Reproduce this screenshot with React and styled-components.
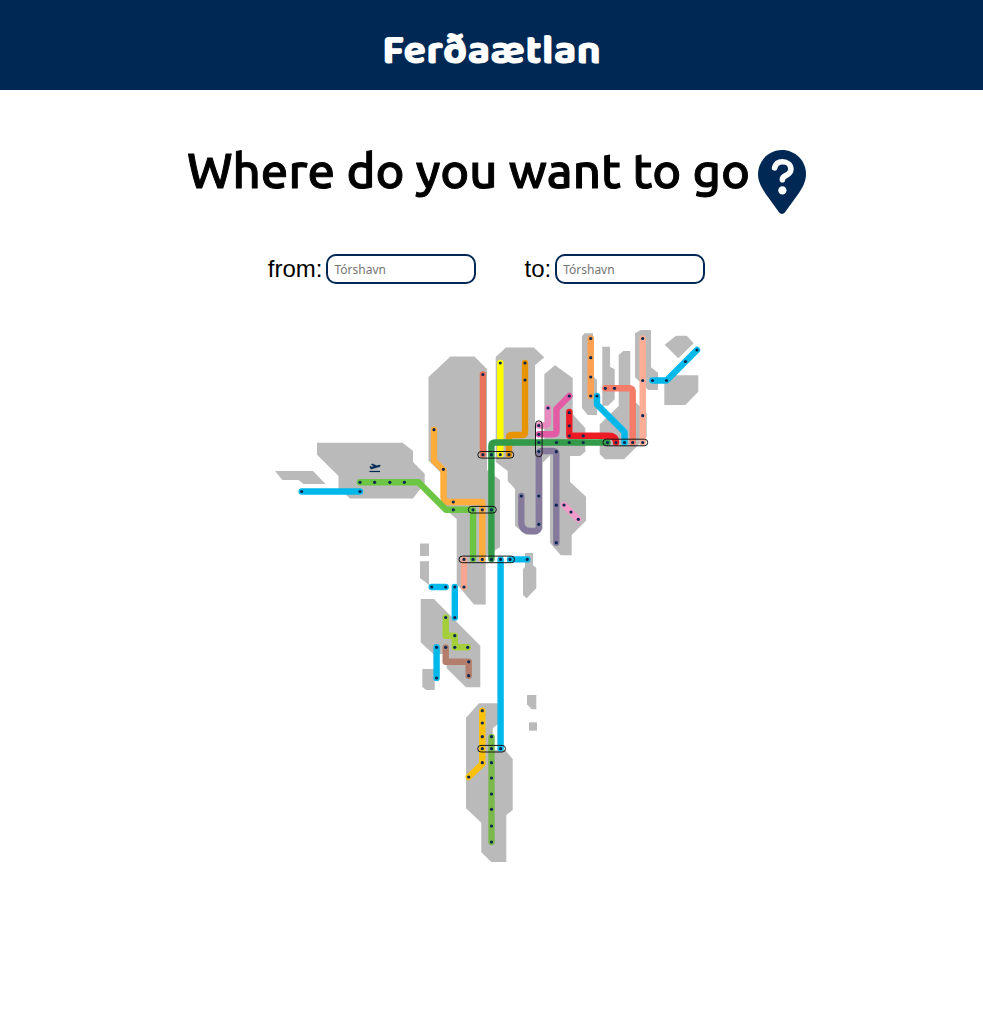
import React from "react";
import styled, { createGlobalStyle } from "styled-components";

const NAVY = "#002855";
const BLUE = "#00b9ea";

const GlobalStyle = createGlobalStyle`
  body {
    margin: 0;
    background: #fff;
    color: #000;
    font-family: "Liberation Sans", Arial, sans-serif;
  }
`;

const Header = styled.header`
  display: flex;
  align-items: center;
  justify-content: center;
  box-sizing: border-box;
  height: 90px;
  padding-top: 14px;
  background: ${NAVY};
`;

const Brand = styled.h1`
  margin: 0;
  color: #fff;
  font-family: Baloo, "Baloo Bhai", "Baloo 2", Inter, sans-serif;
  font-size: 42px;
  font-weight: 900;
  line-height: 48px;
`;

const Main = styled.main`
  display: flex;
  flex-direction: column;
  align-items: center;
  padding: 60px 16px;
`;

const Question = styled.div`
  display: flex;
  align-items: flex-start;
  gap: 8px;
  margin-left: 10px;
`;

const QuestionText = styled.h2`
  margin: 0;
  font-family: Ubuntu, "Noto Sans", sans-serif;
  font-size: 49px;
  font-weight: 500;
  line-height: 40px;
  -webkit-text-stroke: 1px #000;
`;

const PinIcon = styled.svg`
  flex: none;
  width: 48px;
  height: 64px;
`;

const SearchForm = styled.form`
  display: flex;
  flex-wrap: wrap;
  justify-content: center;
  gap: 16px 48px;
  margin-top: 40px;
  padding-right: 10px;
`;

const Field = styled.div`
  display: flex;
  align-items: center;
  gap: 4px;
`;

const Label = styled.label`
  font-size: 24px;
  line-height: 30px;
`;

const PlaceInput = styled.input`
  box-sizing: border-box;
  width: 150px;
  height: 30px;
  padding: 0 6px;
  border: 2px solid ${NAVY};
  border-radius: 10px;
  background: #fff;
  font-family: "Noto Sans", sans-serif;
  font-size: 12px;

  &::placeholder {
    color: #757575;
  }
`;

const RouteMap = styled.svg`
  width: 443px;
  max-width: 100%;
  height: auto;
  margin-top: 41px;
`;

const islands = [
  "275,471 313,471 325.5,484 303.5,484 298.5,480 282.5,480",
  "317,442.7 402.5,442.7 413,451 413,462 424.7,473.7 424.7,483 413,498.5 350,498.5 338.5,488 338.5,476 317,454.7",
  "428.5,377 450.5,356.5 474.5,356.5 487,369 487,470 500,480 500,547 494,551 485.7,556 485.7,604.5 474,604.5 456.7,584 456.7,519 444,508 444,476 428.5,460.6",
  "495.7,357 506,347.5 533.7,347.5 544.3,357.3 535,365.3 535,440 549.5,446 549.5,456 542.7,462.7 542.7,528.7 536.7,534.7 526,534.7 515,525.7 515,489 507.7,481 507.7,471 495.7,462",
  "544.3,374.3 555,365.3 572.7,378 572.7,414.3 585.3,428.3 585.3,451.7 580,456 570,456 570,481.7 586,496.7 586,520.7 571.7,535 571.7,555.3 560.7,555.3 550,542.7 550,456 544.3,450",
  "582,336 584.7,333.3 593,333.3 593,376 597,380 597,415 587.7,415 582,408",
  "602.3,346.7 610,346.7 610,366.7 614.7,369.3 614.7,399.3 608,405.7 602.3,405.7",
  "618.7,355 623.3,351 630.3,351 630.3,400 636.7,403.3 646.7,413.3 646.7,436.7 624,459.3 605,459.3 599.7,454 599.7,424.3 618.7,406",
  "635,333.3 640.7,330 651,330 651,367.3 658,372.7 658,390 648.3,390 635,377.3",
  "664.7,344.7 676,335.7 686.7,335.7 693.7,343.3 678.3,358.3",
  "671.7,375.3 698.3,375.3 698.3,391.7 685.3,405 664.3,405 664.3,382.3",
  "525,553 533,553 533,565.3 536.3,567.7 536.3,588.3 526.7,598.3 523,595 523,569.3 525,566.7",
  "420,543.5 429,543.5 429,556 420,556",
  "420,561.3 429,561.3 429,585 420,578",
  "420.7,599 434,599 480.3,645.7 480.3,687.3 466,687.3 446.7,668.3 446.7,654 433.3,654 420.7,642.3",
  "422.3,669 434.7,669 434.7,690 426,690 422.3,686.7",
  "466,717.7 479,703.2 498.3,703.2 498.3,724 492.7,728.3 492.7,750 505,750 512.7,759 512.7,810 506.3,815 506.3,862 491.3,862 481.3,852.3 481.3,822.7 466,808.3",
  "527,695 536.3,695 536.3,709.3 531.7,709.3 527,704.3",
  "529,722.3 537,722.3 537,730.7 529,730.7",
];

const routes = [
  { color: BLUE, d: "M301.7 491.5H360" },
  { color: "#ffad3d", d: "M434 429.7V461L443.5 470V497Q443.5 502 449 502H482.3V559" },
  { color: "#6cc644", d: "M360 482.3H418.5L446 509.8H473V559" },
  { color: "#e8735a", d: "M482.9 374.5V454.5" },
  { color: "#ffff00", d: "M500.3 363V454.5" },
  { color: "#e89400", d: "M525 363V432Q525 435 522 435H512Q509 435 509 438V454.5" },
  { color: "#e88ac0", d: "M548 408V422Q548 425.5 544.5 425.5H539" },
  { color: "#e35aa5", d: "M569.3 396L556.5 409V431Q556.5 434.3 553.5 434.3H539" },
  { color: "#857a9c", d: "M521.3 496V522Q521.3 531 530.5 531H535Q538.8 531 538.8 527V454Q538.8 451 542 451H553Q556.3 451 556.3 454V542.7" },
  { color: "#329a48", d: "M491.4 559V446Q491.4 442.5 495 442.5H607.5" },
  { color: "#ed1c24", d: "M569.3 412V435.8H608Q616 435.8 616 442.5" },
  { color: "#fda04f", d: "M590.7 338.5V396" },
  { color: BLUE, d: "M597 396V404.5L624.5 432V442.5" },
  { color: "#f57c68", d: "M605.3 388.3H629Q632.7 388.3 632.7 392V442.5" },
  { color: "#ffad96", d: "M642.7 338.5V442.5" },
  { color: BLUE, d: "M652.5 380.5H666.5L697 350" },
  { color: "#f19bca", d: "M564 505L578.3 519.3" },
  { color: "#f5a78f", d: "M464 559.4V587" },
  { color: BLUE, d: "M500.6 559.4V748.5" },
  { color: BLUE, d: "M510 559.4H527.3" },
  { color: BLUE, d: "M431.7 587H445.7" },
  { color: BLUE, d: "M454.8 587V617.5" },
  { color: "#a4cf3b", d: "M445.7 617.5V635.7H454.8V647.3H467.7" },
  { color: "#b37f6c", d: "M445.7 647.5V661.8H468.7V675.7" },
  { color: BLUE, d: "M436.6 647.3V678" },
  { color: "#f9c10c", d: "M482.3 710.7V764L468.7 777" },
  { color: "#7ab84c", d: "M491.5 737V842" },
];

const stops = [
  [301.7, 491.5], [360, 491.5], [360, 482.3], [374.6, 482.3], [389.8, 482.3], [404.4, 482.3],
  [434, 429.7], [443.4, 469.3], [453.3, 502], [453.3, 509.8], [473, 509.8], [482.3, 509.8], [491.4, 509.8],
  [482.9, 374.5], [482.9, 454.7], [491.4, 454.7], [500.3, 454.7], [509, 454.7],
  [500.3, 363], [525, 363], [525, 380], [548, 408],
  [538.8, 425.5], [538.8, 434.3], [538.8, 442.5], [538.8, 451.5], [556.5, 442.5], [569.3, 442.5], [583.2, 442.5],
  [569.3, 396], [569.3, 412.7], [569.3, 425.8], [569.3, 435.8], [583.2, 435.8], [556.3, 451.7],
  [521.3, 496], [538.8, 496], [538.8, 524.3], [556.3, 505.2], [556.3, 542.7], [564, 505], [571, 512], [578.3, 519.3],
  [590.7, 338.5], [590.7, 357.7], [590.7, 377], [590.7, 396], [597, 396], [605.3, 388.3], [614.5, 388.3],
  [607.5, 442.5], [616, 442.5], [624.5, 442.5], [632.7, 442.5], [642.7, 442.5],
  [642.7, 338.5], [642.7, 380.5], [642.7, 415.7], [652.5, 380.5], [666.5, 380.5], [685.5, 361.5], [697, 350],
  [464, 559.4], [473, 559.4], [482.3, 559.4], [491.4, 559.4], [500.6, 559.4], [510, 559.4], [527.3, 559.4],
  [464, 587], [431.7, 587], [445.7, 587], [454.8, 587], [454.8, 617.5], [445.7, 617.5], [454.8, 635.7],
  [454.8, 647.3], [467.7, 647.3], [445.7, 647.3], [436.6, 647.3], [468.7, 661.8], [468.7, 675.7], [436.6, 678],
  [482.3, 710.7], [482.3, 723], [482.3, 736.7], [482.3, 748.7], [482.3, 762.7], [468.7, 777],
  [491.5, 736.7], [491.5, 748.7], [500.6, 748.7], [491.5, 762.7], [491.5, 778], [491.5, 794], [491.5, 809.3],
  [491.5, 826], [491.5, 842],
];

const hubs = [
  [477.8, 451.5, 36, 6.6],
  [468.3, 506.4, 28, 6.6],
  [459, 556.1, 55.6, 6.6],
  [535.5, 420.8, 6.6, 36],
  [602.9, 439.2, 44.8, 6.6],
  [477.7, 745.4, 27.8, 6.6],
];

function QuestionPin() {
  return (
    <PinIcon viewBox="0 0 384 512" aria-hidden="true">
      <path
        fill={NAVY}
        d="M192 0C86 0 0 86 0 192C0 250 27 299 58 345L168 498Q192 526 216 498L326 345C357 299 384 250 384 192C384 86 298 0 192 0z"
      />
      <path
        fill="none"
        stroke="#fff"
        strokeWidth="45"
        strokeLinecap="round"
        strokeLinejoin="round"
        d="M133 143C141 110 163 94 195 94C234 94 263 118 263 152C263 180 247 193 222 205C203 214 195 222 195 237"
      />
      <circle cx="195" cy="323" r="33" fill="#fff" />
    </PinIcon>
  );
}

function Airport() {
  return (
    <g fill={NAVY} stroke={NAVY} strokeLinejoin="round">
      <path
        strokeWidth="0.4"
        d="M369.8 466.6L370.7 466.3L371.9 467.1L373.8 466.6L371.3 464.3L372.6 463.9L376.8 465.8L379 465.1Q380.3 464.9 380.4 465.7Q380.3 466.4 379.3 466.8L371.5 469.1Q370.8 469.2 370.5 468.5Z"
      />
      <path strokeWidth="1.2" d="M369.4 471.5H380" />
    </g>
  );
}

function FaroeMap() {
  return (
    <RouteMap viewBox="270 325 443 545" role="img" aria-label="Faroe Islands route map">
      <g fill="#bababa">
        {islands.map((points) => (
          <polygon key={points} points={points} />
        ))}
      </g>
      <g fill="none" strokeWidth="6.4" strokeLinecap="round" strokeLinejoin="round">
        {routes.map(({ color, d }) => (
          <path key={d} d={d} stroke={color} />
        ))}
      </g>
      <g fill="none" stroke="#161616" strokeWidth="1">
        {hubs.map(([x, y, width, height]) => (
          <rect key={`${x}-${y}`} x={x} y={y} width={width} height={height} rx="3.3" />
        ))}
      </g>
      <g fill="#08264f">
        {stops.map(([x, y]) => (
          <circle key={`${x}-${y}`} cx={x} cy={y} r="1.6" />
        ))}
      </g>
      <Airport />
    </RouteMap>
  );
}

export default function App() {
  return (
    <>
      <GlobalStyle />
      <Header>
        <Brand>Ferðaætlan</Brand>
      </Header>
      <Main>
        <Question>
          <QuestionText>Where do you want to go</QuestionText>
          <QuestionPin />
        </Question>
        <SearchForm>
          <Field>
            <Label htmlFor="from">from:</Label>
            <PlaceInput id="from" type="text" placeholder="Tórshavn" />
          </Field>
          <Field>
            <Label htmlFor="to">to:</Label>
            <PlaceInput id="to" type="text" placeholder="Tórshavn" />
          </Field>
        </SearchForm>
        <FaroeMap />
      </Main>
    </>
  );
}
